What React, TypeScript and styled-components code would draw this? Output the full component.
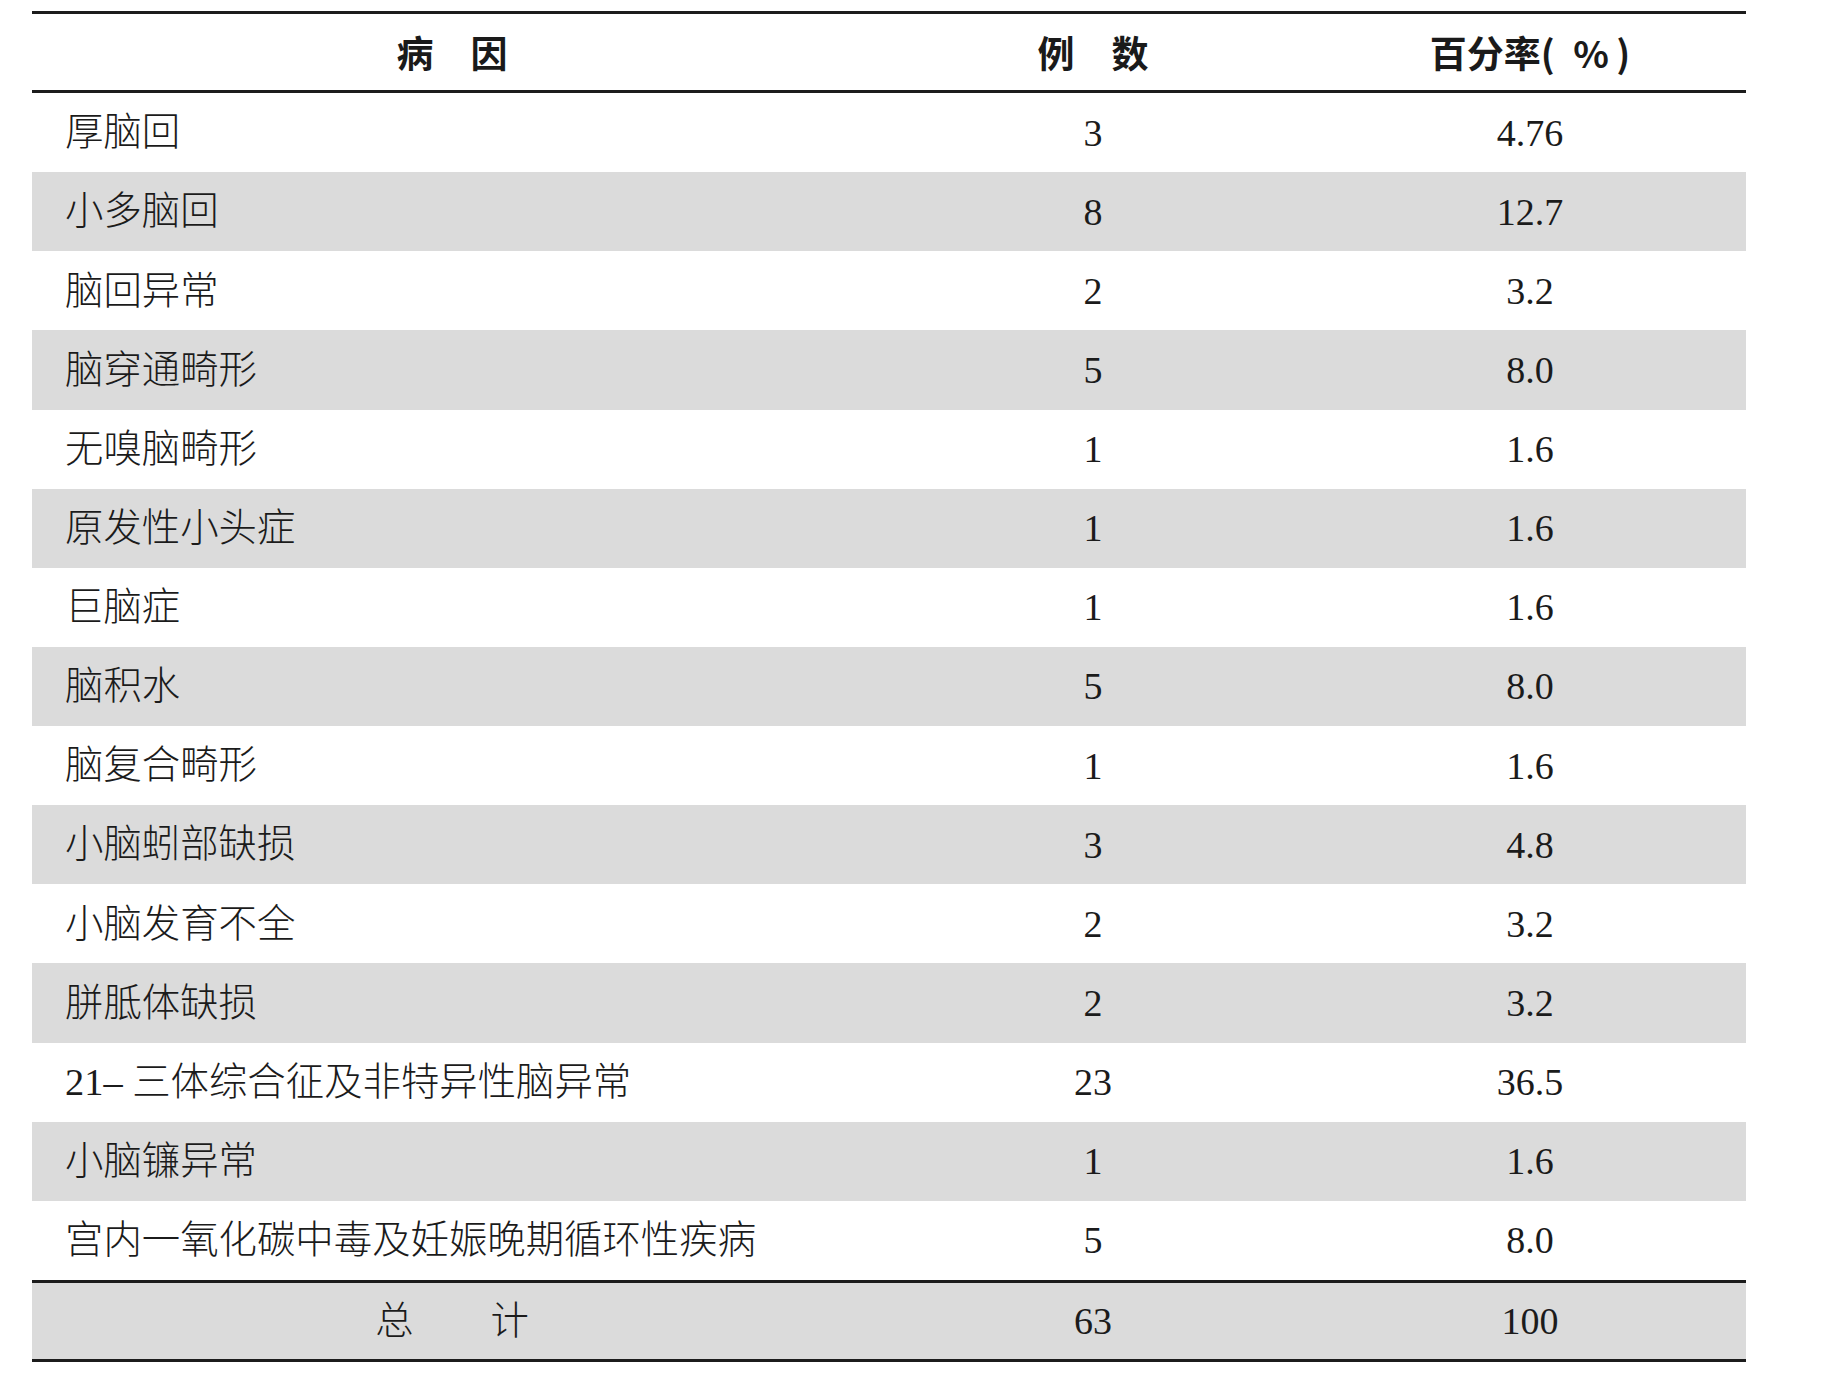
import React from "react";
import styled, { createGlobalStyle } from "styled-components";

const GlobalStyle = createGlobalStyle`
  html, body {
    margin: 0;
    padding: 0;
    background: #ffffff;
  }
  body {
    font-family: "Liberation Serif", "Noto Sans CJK SC", serif;
    color: #1b1b1b;
  }
`;

const COLS = "840px 442px 432px";
const RULE = "3px solid #1c1c1c";

const Page = styled.div`
  padding: 11px 0 0 32px;
`;

const Table = styled.div`
  width: 1714px;
  border-top: ${RULE};
  border-bottom: ${RULE};
`;

const HeaderRow = styled.div`
  display: grid;
  grid-template-columns: ${COLS};
  align-items: center;
  height: 76px;
  border-bottom: ${RULE};
`;

const HeadCell = styled.div`
  text-align: center;
  font-family: "Noto Sans CJK SC", "Liberation Sans", sans-serif;
  font-weight: 700;
  font-size: 37px;
  line-height: 1;
  white-space: pre;
  color: #1a1a1a;
`;

const Row = styled.div<{ $shaded: boolean }>`
  display: grid;
  grid-template-columns: ${COLS};
  align-items: center;
  height: 79.13px;
  background: ${(p) => (p.$shaded ? "#dbdbdb" : "#ffffff")};
`;

const TotalRow = styled(Row)`
  height: 76px;
  border-top: ${RULE};
`;

const NameCell = styled.div<{ $center?: boolean }>`
  padding-left: ${(p) => (p.$center ? "0" : "33px")};
  text-align: ${(p) => (p.$center ? "center" : "left")};
  font-size: 38.4px;
  font-weight: 300;
  line-height: 1;
  white-space: pre;
`;

const NumCell = styled.div`
  text-align: center;
  font-size: 38px;
  line-height: 1;
  white-space: nowrap;
`;

type Item = { name: string; count: string; pct: string };

const rows: Item[] = [
  { name: "厚脑回", count: "3", pct: "4.76" },
  { name: "小多脑回", count: "8", pct: "12.7" },
  { name: "脑回异常", count: "2", pct: "3.2" },
  { name: "脑穿通畸形", count: "5", pct: "8.0" },
  { name: "无嗅脑畸形", count: "1", pct: "1.6" },
  { name: "原发性小头症", count: "1", pct: "1.6" },
  { name: "巨脑症", count: "1", pct: "1.6" },
  { name: "脑积水", count: "5", pct: "8.0" },
  { name: "脑复合畸形", count: "1", pct: "1.6" },
  { name: "小脑蚓部缺损", count: "3", pct: "4.8" },
  { name: "小脑发育不全", count: "2", pct: "3.2" },
  { name: "胼胝体缺损", count: "2", pct: "3.2" },
  { name: "21\u2013 三体综合征及非特异性脑异常", count: "23", pct: "36.5" },
  { name: "小脑镰异常", count: "1", pct: "1.6" },
  { name: "宫内一氧化碳中毒及妊娠晚期循环性疾病", count: "5", pct: "8.0" },
];

export default function App() {
  return (
    <>
      <GlobalStyle />
      <Page>
        <Table>
          <HeaderRow>
            <HeadCell>病　因</HeadCell>
            <HeadCell>例　数</HeadCell>
            <HeadCell>{"百分率(\u2002%\u2009)"}</HeadCell>
          </HeaderRow>
          {rows.map((r, i) => (
            <Row key={r.name} $shaded={i % 2 === 1}>
              <NameCell>{r.name}</NameCell>
              <NumCell>{r.count}</NumCell>
              <NumCell>{r.pct}</NumCell>
            </Row>
          ))}
          <TotalRow $shaded>
            <NameCell $center>总　　计</NameCell>
            <NumCell>63</NumCell>
            <NumCell>100</NumCell>
          </TotalRow>
        </Table>
      </Page>
    </>
  );
}
